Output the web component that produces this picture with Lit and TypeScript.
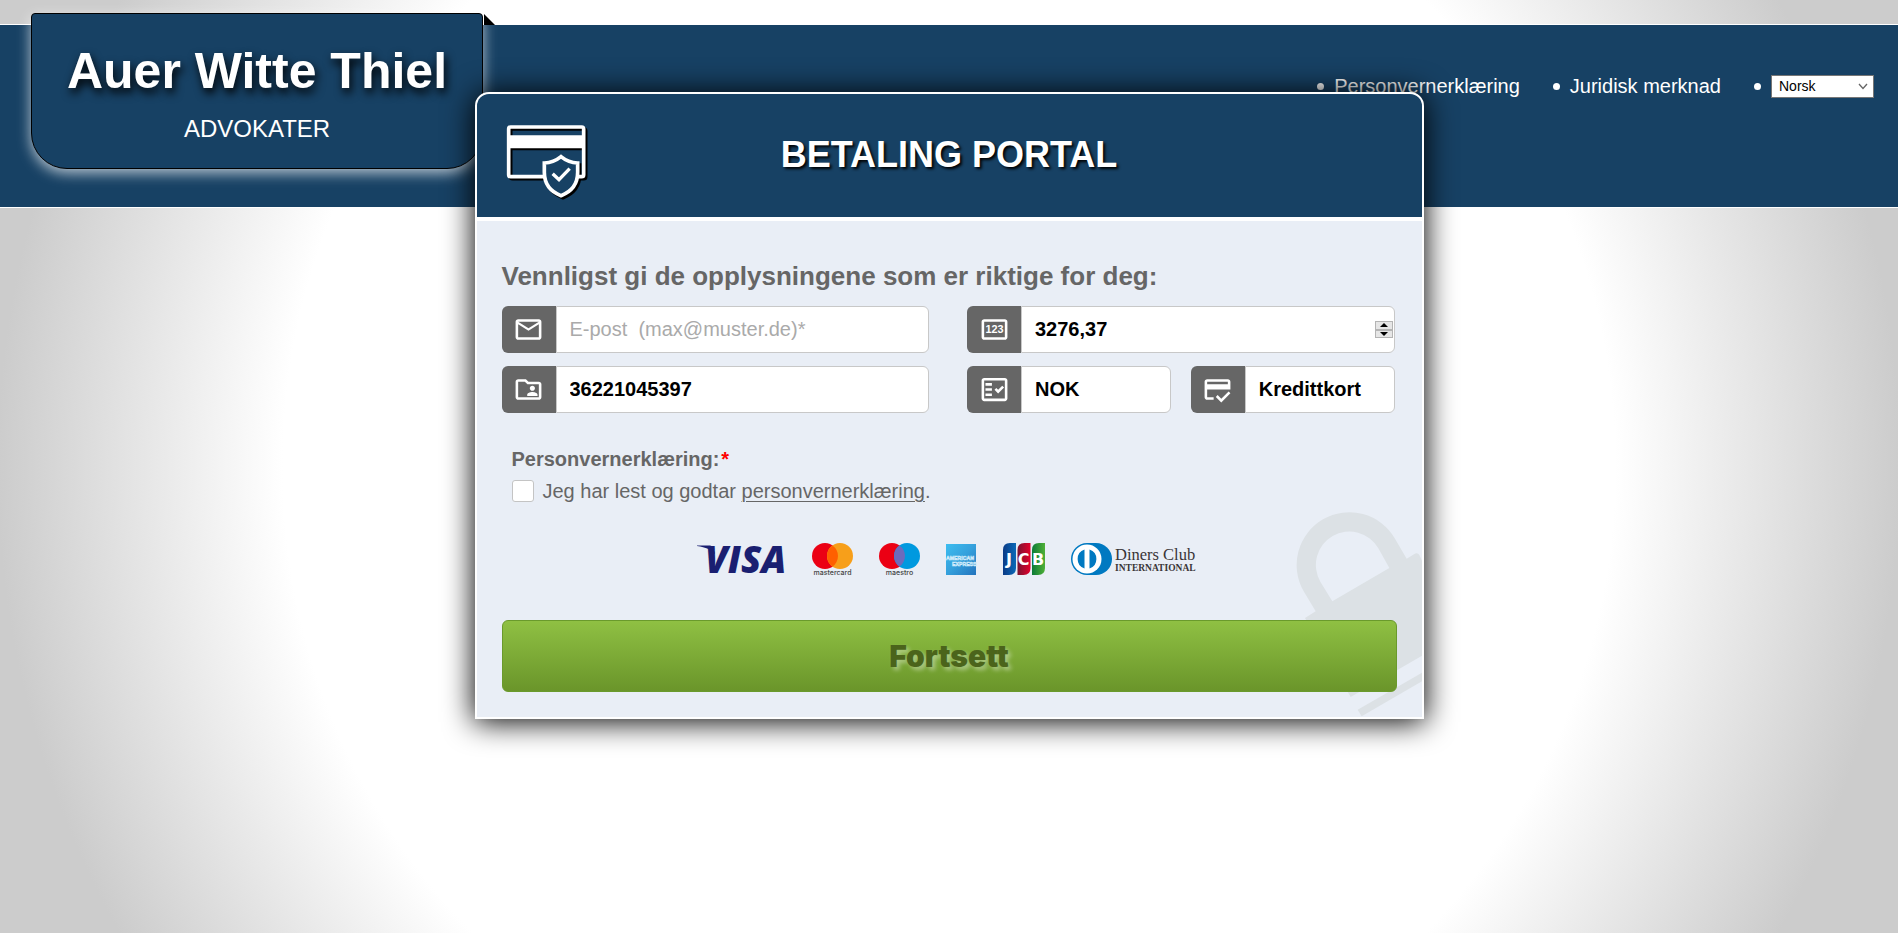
import { LitElement, html, css, svg } from "lit";
import { customElement, property, state } from "lit/decorators.js";

const iconPaths = {
  mail: svg`<path d="M22 6c0-1.1-.9-2-2-2H4c-1.1 0-2 .9-2 2v12c0 1.1.9 2 2 2h16c1.1 0 2-.9 2-2V6zm-2 0l-8 5-8-5h16zm0 12H4V8l8 5 8-5v10z"/>`,
  folder: svg`<path d="M20 6h-8l-2-2H4c-1.1 0-1.99.9-1.99 2L2 18c0 1.1.9 2 2 2h16c1.1 0 2-.9 2-2V8c0-1.1-.9-2-2-2zm0 12H4V6h5.17l2 2H20v10zm-5-5c1.1 0 2-.9 2-2s-.9-2-2-2-2 .9-2 2 .9 2 2 2zm-4 4h8v-1c0-1.33-2.67-2-4-2s-4 .67-4 2v1z"/>`,
  amount: svg`<path d="M20 4H4c-1.1 0-2 .9-2 2v12c0 1.1.9 2 2 2h16c1.1 0 2-.9 2-2V6c0-1.1-.9-2-2-2zm0 14H4V6h16v12z"/><text x="12" y="14.9" font-size="8.4" font-weight="700" text-anchor="middle">123</text>`,
  currency: svg`<path d="M20 3H4c-1.1 0-2 .9-2 2v14c0 1.1.9 2 2 2h16c1.1 0 2-.9 2-2V5c0-1.1-.9-2-2-2zm0 16H4V5h16v14z"/><path d="M19.41 10.42 17.99 9l-3.17 3.17-1.41-1.42L12 12.16 14.82 15zM5 7h5v2H5zM5 11h5v2H5zM5 15h5v2H5z"/>`,
  card: svg`<path d="M20 4H4c-1.11 0-1.99.89-1.99 2L2 18c0 1.11.89 2 2 2h5v-2H4v-6h18V6c0-1.11-.89-2-2-2zm0 4H4V6h16v2zm-5.07 11.17l-2.83-2.83-1.41 1.41L14.93 22 22 14.93l-1.41-1.41-5.66 5.65z"/>`,
};

@customElement("icon-field")
class IconField extends LitElement {
  @property() icon: keyof typeof iconPaths = "mail";
  @property() label = "";
  @property() value = "";
  @property() placeholder = "";
  @property({ type: Boolean }) stepper = false;

  static styles = css`
    :host {
      display: flex;
      position: relative;
      height: 47px;
      min-width: 0;
    }
    .tag {
      display: flex;
      flex: none;
      align-items: center;
      justify-content: center;
      width: 54px;
      background: #666;
      border-radius: 6px 0 0 6px;
    }
    .tag svg {
      width: 31px;
      height: 31px;
      fill: #fff;
    }
    .box {
      flex: 1;
      min-width: 0;
      box-sizing: border-box;
      height: 47px;
      padding: 0 13px;
      border: 1px solid #c8c8c8;
      border-radius: 0 6px 6px 0;
      background: #fff;
      color: #000;
      font: bold 20px "Liberation Sans", Arial, sans-serif;
      outline: none;
    }
    .box::placeholder {
      font-weight: normal;
      color: #aaa;
      opacity: 1;
      white-space: pre;
    }
    .stepper {
      position: absolute;
      right: 2px;
      top: 15px;
      display: grid;
      width: 18px;
      height: 17px;
    }
    .step {
      display: flex;
      align-items: center;
      justify-content: center;
      padding: 0;
      border: 1px solid #b4b4b4;
      background: #e6e6e6;
      min-height: 0;
    }
    .step svg {
      width: 8px;
      height: 4px;
    }
  `;

  private step(by: number) {
    const n = parseFloat(this.value.replace(",", ".")) + by;
    this.value = n.toFixed(2).replace(".", ",");
  }

  render() {
    return html`
      <label class="tag" for="box" aria-label=${this.label}>
        <svg viewBox="0 0 24 24" font-family="Liberation Sans, sans-serif">${iconPaths[this.icon]}</svg>
      </label>
      <input id="box" class="box" aria-label=${this.label} .value=${this.value} placeholder=${this.placeholder} />
      ${this.stepper
        ? html`<span class="stepper">
            <button class="step" type="button" aria-label="+" @click=${() => this.step(1)}>
              <svg viewBox="0 0 8 4"><path d="M4 0 8 4H0z" /></svg>
            </button>
            <button class="step" type="button" aria-label="-" @click=${() => this.step(-1)}>
              <svg viewBox="0 0 8 4"><path d="M0 0h8L4 4z" /></svg>
            </button>
          </span>`
        : null}
    `;
  }
}

@customElement("card-brands")
class CardBrands extends LitElement {
  static styles = css`
    :host {
      display: flex;
      justify-content: center;
      align-items: center;
      gap: 26px;
      height: 32px;
      padding-right: 6px;
    }
    svg {
      flex: none;
      height: 32px;
      overflow: visible;
    }
    .visa { width: 89px; }
    .rings { width: 41px; }
    .amex { width: 30px; }
    .jcb { width: 43px; }
    .diners { width: 125px; }
  `;

  private rings(name: string, right: string, overlap: string) {
    return html`<svg class="rings" viewBox="0 0 41 32" role="img" aria-label=${name}>
      <circle cx="13" cy="13" r="13" fill="#eb0014" />
      <circle cx="28" cy="13" r="13" fill=${right} />
      <path d="M20.5 2.4a13 13 0 0 1 0 21.2a13 13 0 0 1 0-21.2z" fill=${overlap} />
      <text x="20.5" y="32" text-anchor="middle" font-family="Inter, sans-serif" font-size="7" font-weight="500" fill="#444">${name}</text>
    </svg>`;
  }

  render() {
    return html`
      <svg class="visa" viewBox="0 0 89 32" role="img" aria-label="Visa">
        <path d="M0 2.500h13l3 1 2 8C14 6 9 4.500 0 3z" fill="#1a1f71" />
        <text x="8" y="29.500" font-family="Open Sans, sans-serif" font-size="37" font-weight="800" font-style="italic" fill="#1a1f71">VISA</text>
      </svg>
      ${this.rings("mastercard", "#f79f1a", "#ff6000")}
      ${this.rings("maestro", "#0099df", "#6c6bbd")}
      <svg class="amex" viewBox="0 0 30 32" role="img" aria-label="American Express">
        <defs>
          <linearGradient id="ax" x1="0" y1="0" x2="1" y2="1">
            <stop offset="0" stop-color="#3cbdf0" />
            <stop offset=".5" stop-color="#35a0dc" />
            <stop offset="1" stop-color="#2373bd" />
          </linearGradient>
        </defs>
        <path d="M0 1h30v31H0z" fill="url(#ax)" />
        <g font-family="Liberation Sans, sans-serif" font-weight="700" fill="none" stroke="#cdeafa" stroke-width=".6">
          <text x="0" y="16.500" font-size="5.200">AMERICAN</text>
          <text x="6" y="22.500" font-size="5.200">EXPRESS</text>
        </g>
      </svg>
      <svg class="jcb" viewBox="0 0 43 32" role="img" aria-label="JCB">
        <defs>
          <linearGradient id="jb"><stop stop-color="#0a3a86" /><stop offset="1" stop-color="#0b6ab8" /></linearGradient>
          <linearGradient id="jr"><stop stop-color="#7a1430" /><stop offset="1" stop-color="#e4002b" /></linearGradient>
          <linearGradient id="jg"><stop stop-color="#0b7a38" /><stop offset="1" stop-color="#4fb036" /></linearGradient>
        </defs>
        <path d="M1 7Q1 0 8 0h6v25q0 7-7 7H1z" fill="url(#jb)" />
        <path d="M15.500 7q0-7 7-7h6v25q0 7-7 7h-6z" fill="url(#jr)" />
        <path d="M30 7q0-7 7-7h6v25q0 7-7 7h-6z" fill="url(#jg)" />
        <g font-family="DejaVu Sans, sans-serif" font-weight="700" font-size="16" text-anchor="middle" fill="#fff">
          <text x="7" y="21.500">J</text>
          <text x="21.500" y="21.500">C</text>
          <text x="36" y="21.500">B</text>
        </g>
      </svg>
      <svg class="diners" viewBox="0 0 125 32" role="img" aria-label="Diners Club International">
        <path d="M16 0h9a16 16 0 0 1 0 32h-9a16 16 0 0 1 0-32z" fill="#0079c1" />
        <circle cx="16" cy="16" r="14.500" fill="#fff" />
        <path d="M13.500 6.500v19a10 10 0 0 1 0-19zM18.500 6.500v19a10 10 0 0 0 0-19z" fill="#0079c1" />
        <g font-family="Liberation Serif, serif" fill="#3a3536">
          <text x="44" y="17" font-size="16.500">Diners Club</text>
          <text x="44" y="28" font-size="9.500" font-weight="700">INTERNATIONAL</text>
        </g>
      </svg>
    `;
  }
}

@customElement("app-root")
class AppRoot extends LitElement {
  @state() private accepted = false;

  static styles = css`
    :host {
      display: block;
      box-sizing: border-box;
      min-height: 100vh;
      padding-top: 24px;
      background: radial-gradient(circle at center, #fff 63%, #ccc 90%);
      font-family: "Liberation Sans", Arial, sans-serif;
      font-size: 20px;
      color: #666;
    }
    .bar {
      position: relative;
      display: flex;
      justify-content: flex-end;
      align-items: flex-start;
      box-sizing: border-box;
      height: 184px;
      padding: 49px 24px 0;
      border: solid #fff;
      border-width: 1px 0;
      background: #174164;
    }
    .badge {
      position: absolute;
      left: 31px;
      top: -12px;
      display: flex;
      flex-direction: column;
      align-items: center;
      box-sizing: border-box;
      width: 452px;
      height: 156px;
      padding-top: 27px;
      gap: 14px;
      border: 1px solid #000;
      border-radius: 4px 4px 36px 36px;
      background: #174164;
      box-shadow: 0 4px 14px rgba(255, 255, 255, 0.7);
      color: #fff;
    }
    .fold {
      position: absolute;
      left: 484px;
      top: -11px;
      width: 11px;
      height: 11px;
      background: #000;
      clip-path: polygon(0 0, 100% 100%, 0 100%);
    }
    .firm {
      font-size: 50px;
      line-height: 60px;
      font-weight: bold;
      text-shadow: 2px 5px 10px #000;
    }
    .trade {
      font-size: 24px;
      line-height: 28px;
    }
    .menu {
      display: flex;
      align-items: center;
      gap: 33px;
      margin: 0;
      padding: 0;
      list-style: none;
      color: #fff;
    }
    .item {
      display: flex;
      align-items: center;
      gap: 10px;
      line-height: 24px;
    }
    .item::before {
      content: "";
      width: 7px;
      height: 7px;
      border-radius: 50%;
      background: #fff;
    }
    .item a {
      color: #fff;
      text-decoration: none;
    }
    .lang {
      display: flex;
      position: relative;
    }
    .lang select {
      appearance: none;
      box-sizing: border-box;
      width: 103px;
      height: 23px;
      padding: 0 7px;
      border: 1px solid #767676;
      border-radius: 0;
      background: #fff;
      color: #000;
      font: 14px "Liberation Sans", Arial, sans-serif;
    }
    .lang svg {
      position: absolute;
      right: 6px;
      top: 8px;
      width: 10px;
      height: 7px;
      pointer-events: none;
    }
    .card {
      position: relative;
      box-sizing: border-box;
      width: 50%;
      margin: -116px auto 40px;
      border: 2px solid #fff;
      border-radius: 14px 14px 0 0;
      background: #e9eef6;
      box-shadow: 0 2px 30px 1px #000;
    }
    .head {
      display: grid;
      grid-template-columns: 82px 1fr 82px;
      align-items: center;
      height: 123px;
      padding: 0 29px;
      border-bottom: 4px solid #fff;
      border-radius: 12px 12px 0 0;
      background: #174164;
      color: #fff;
    }
    .secure {
      width: 82px;
      height: 75px;
      margin-top: 12px;
      filter: drop-shadow(2px 2px 0 #000);
    }
    .head h1 {
      margin: 0;
      padding-bottom: 1px;
      text-align: center;
      font-size: 36px;
      line-height: 42px;
      text-shadow: 2px 2px 3px #000;
    }
    .lock {
      position: absolute;
      right: 0;
      bottom: 0;
      width: 126px;
      height: 206px;
      fill: #dce1e5;
    }
    .form {
      position: relative;
      display: flex;
      flex-direction: column;
      padding: 40px 25px 25px;
    }
    .form h2 {
      margin: 0 0 15px;
      font-size: 26px;
      line-height: 30px;
    }
    .fields {
      display: grid;
      grid-template-columns: 1fr 1fr;
      gap: 13px 38px;
      padding-right: 2px;
    }
    .pair {
      display: grid;
      grid-template-columns: 1fr 1fr;
      gap: 20px;
    }
    .consent {
      margin: 34px 0 40px;
      padding: 0 10px;
      border: 0;
      min-width: 0;
    }
    .consent legend {
      padding: 0 0 9px;
      font-weight: bold;
      line-height: 24px;
    }
    .star {
      margin-left: 2px;
      color: #f00;
    }
    .accept {
      display: flex;
      align-items: flex-start;
      gap: 9px;
      line-height: 23px;
    }
    .accept input {
      appearance: none;
      box-sizing: border-box;
      width: 22px;
      height: 22px;
      margin: 0;
      border: 1px solid #c4c4c4;
      border-radius: 3px;
      background: #fff;
    }
    .accept input:checked {
      background: #666;
    }
    .accept a {
      color: #666;
      text-decoration-thickness: 1px;
      text-underline-offset: 3px;
    }
    .submit {
      height: 72px;
      margin-top: 45px;
      border: 1px solid #6a9a2c;
      border-radius: 6px;
      background: linear-gradient(#8fc043, #6a952a);
      color: #4b641b;
      font: 900 30px Inter, "Liberation Sans", sans-serif;
      text-shadow: 3px 3px 4px rgba(255, 255, 255, 0.4);
    }
  `;

  render() {
    return html`
      <header class="bar">
        <div class="badge">
          <div class="firm">Auer Witte Thiel</div>
          <div class="trade">ADVOKATER</div>
        </div>
        <div class="fold"></div>
        <nav>
          <ul class="menu">
            <li class="item"><a href="#personvern">Personvernerklæring</a></li>
            <li class="item"><a href="#juridisk">Juridisk merknad</a></li>
            <li class="item">
              <span class="lang">
                <select aria-label="Språk">
                  <option>Norsk</option>
                </select>
                <svg viewBox="0 0 10 7"><path d="M1 1l4 4.500L9 1" fill="none" stroke="#666" stroke-width="1.300" /></svg>
              </span>
            </li>
          </ul>
        </nav>
      </header>
      <main class="card">
        <div class="head">
          <svg class="secure" viewBox="138 132 246 225" fill="none" stroke="#fff" stroke-width="11">
            <rect x="146" y="141" width="225" height="149" rx="6" />
            <path d="M146 185h225" stroke-width="39" />
            <path d="M303 230q22 18 50 19v28c0 34-18 58-50 70-32-12-50-36-50-70v-28q28-1 50-19z" fill="#174164" stroke-width="11" />
            <path d="M278 281l19 18 32-33" stroke-width="10" />
          </svg>
          <h1>BETALING PORTAL</h1>
        </div>
        <svg class="lock" viewBox="348 64 378 618" aria-hidden="true">
          <path d="M407 365l-36-60A158 158 0 0 1 645 147l35 60 22-13q10-7 16 2l8 17v285L512 622 375 385zM457 335L628 235l-33-59A100 100 0 0 0 421 276z" fill-rule="evenodd" />
          <path d="M533 660l12 20 181-105v-26z" />
        </svg>
        <form class="form" @submit=${(e: Event) => e.preventDefault()}>
          <h2>Vennligst gi de opplysningene som er riktige for deg:</h2>
          <div class="fields">
            <icon-field icon="mail" label="E-post" placeholder="E-post  (max@muster.de)*"></icon-field>
            <icon-field icon="amount" label="Beløp" value="3276,37" stepper></icon-field>
            <icon-field icon="folder" label="Referanse" value="36221045397"></icon-field>
            <div class="pair">
              <icon-field icon="currency" label="Valuta" value="NOK"></icon-field>
              <icon-field icon="card" label="Betalingsmåte" value="Kredittkort"></icon-field>
            </div>
          </div>
          <fieldset class="consent">
            <legend>Personvernerklæring:<span class="star">*</span></legend>
            <div class="accept">
              <input
                id="accept"
                type="checkbox"
                .checked=${this.accepted}
                @change=${(e: Event) => (this.accepted = (e.target as HTMLInputElement).checked)}
              />
              <label for="accept">Jeg har lest og godtar <a href="#personvern">personvernerklæring</a>.</label>
            </div>
          </fieldset>
          <card-brands></card-brands>
          <button class="submit" type="submit">Fortsett</button>
        </form>
      </main>
    `;
  }
}
